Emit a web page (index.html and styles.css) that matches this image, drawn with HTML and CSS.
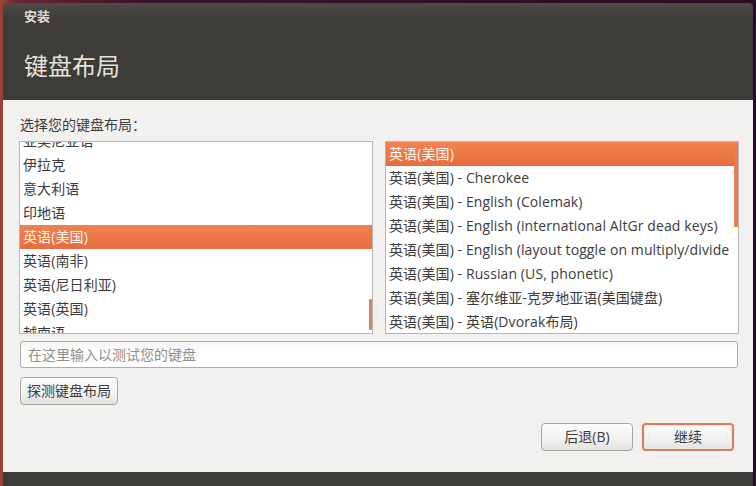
FILE: index.html
```html
<!DOCTYPE html>
<html lang="zh-CN">
<head>
<meta charset="utf-8">
<title>安装</title>
<link rel="stylesheet" href="styles.css">
</head>
<body>
<div class="window">
  <header class="titlebar">
    <div class="wm-title">安装</div>
    <h1 class="heading">键盘布局</h1>
  </header>
  <main class="content">
    <div class="label">选择您的键盘布局：</div>
    <div class="lists">
      <div class="list">
        <ul class="rows rows-scrolled">
          <li>亚美尼亚语</li>
          <li>伊拉克</li>
          <li>意大利语</li>
          <li>印地语</li>
          <li class="selected">英语(美国)</li>
          <li>英语(南非)</li>
          <li>英语(尼日利亚)</li>
          <li>英语(英国)</li>
          <li>越南语</li>
        </ul>
        <div class="scroll scroll-left"></div>
      </div>
      <div class="list">
        <ul class="rows">
          <li class="selected">英语(美国)</li>
          <li>英语(美国) - Cherokee</li>
          <li>英语(美国) - English (Colemak)</li>
          <li>英语(美国) - English (international AltGr dead keys)</li>
          <li>英语(美国) - English (layout toggle on multiply/divide key)</li>
          <li>英语(美国) - Russian (US, phonetic)</li>
          <li>英语(美国) - 塞尔维亚-克罗地亚语(美国键盘)</li>
          <li>英语(美国) - 英语(Dvorak布局)</li>
        </ul>
        <div class="scroll scroll-right"></div>
      </div>
    </div>
    <input class="test-input" type="text" placeholder="在这里输入以测试您的键盘">
    <div class="detect-row">
      <button class="btn btn-detect">探测键盘布局</button>
    </div>
    <div class="footer">
      <button class="btn btn-wide">后退(B)</button>
      <button class="btn btn-wide btn-default">继续</button>
    </div>
  </main>
  <div class="bottombar"></div>
</div>
</body>
</html>
```
FILE: styles.css
```css
html, body {
  margin: 0;
  padding: 0;
}
body {
  width: 756px;
  height: 486px;
  overflow: hidden;
  background: linear-gradient(90deg, #9a4638 0, #6a2634 2%, #3a1229 20%, #2a0c1f 100%);
  font-family: "Open Sans", "Noto Sans CJK SC", sans-serif;
  color: #3c3c3c;
}
.window {
  margin: 3px 3px 0 3px;
  height: 483px;
  display: flex;
  flex-direction: column;
  border-radius: 4px 4px 0 0;
  overflow: hidden;
}
.titlebar {
  height: 97px;
  background: linear-gradient(#4d4c47 0, #43423e 8px, #3c3b37 16px, #3c3b37 100%);
  display: flex;
  flex-direction: column;
  padding-left: 21px;
  box-sizing: border-box;
}
.wm-title {
  font-family: "Noto Sans CJK SC", sans-serif;
  font-size: 13px;
  font-weight: 700;
  color: #dfdbd2;
  line-height: 18px;
  margin-top: 4px;
}
.heading {
  margin: 26px 0 0 0;
  font-family: "Noto Sans CJK SC", sans-serif;
  font-weight: 400;
  font-size: 24px;
  line-height: 28px;
  color: #e4e1da;
}
.content {
  flex: 1;
  background: #f2f1f0;
  padding: 15px 14px 0 15px;
  display: flex;
  flex-direction: column;
  border-left: 1px solid #f7f6f4;
}
.label {
  font-size: 14px;
  line-height: 20px;
  height: 20px;
  margin-left: 1px;
}
.lists {
  margin-top: 6px;
  display: grid;
  grid-template-columns: 354px 354px;
  column-gap: 12px;
  height: 193px;
}
.list {
  position: relative;
  background: #ffffff;
  border: 1px solid #b9b7b3;
  overflow: hidden;
}
.rows {
  list-style: none;
  margin: 0 4px 0 0;
  padding: 0;
}
.rows-scrolled {
  margin-top: -13px;
  margin-right: 0;
}
.rows li {
  height: 24px;
  line-height: 24px;
  font-size: 14px;
  padding-left: 3px;
  white-space: nowrap;
  overflow: hidden;
  color: #3c3c3c;
  letter-spacing: 0.1px;
}
.rows li.selected {
  background: linear-gradient(#f28250, #e76d3e);
  color: #fff8f4;
}
.scroll {
  position: absolute;
  right: 0;
  width: 4px;
  border-radius: 1px;
}
.scroll-left {
  top: 157px;
  height: 31px;
  background: #db8260;
  width: 3px;
}
.scroll-right {
  top: 0;
  height: 85px;
  background: #ec7a4b;
}
.test-input {
  margin: 7px 0 0 1px;
  width: 718px;
  height: 27px;
  box-sizing: border-box;
  border: 1px solid #aeaca8;
  border-radius: 3px;
  background: linear-gradient(#f5f5f4, #ffffff 40%);
  font-family: "Open Sans", "Noto Sans CJK SC", sans-serif;
  font-size: 14px;
  padding: 0 7px;
  color: #3c3c3c;
  outline: none;
}
.test-input::placeholder {
  color: #8e8e8c;
}
.detect-row {
  display: flex;
  margin-top: 9px;
  padding-left: 1px;
}
.btn {
  height: 28px;
  box-sizing: border-box;
  border: 1px solid #a9a7a3;
  border-radius: 4px;
  background: linear-gradient(#fdfdfd, #f1f0ef 60%, #e4e2df);
  font-family: "Open Sans", "Noto Sans CJK SC", sans-serif;
  font-size: 14px;
  color: #3c3c3c;
  padding: 0 5px;
  line-height: 24px;
}
.btn-detect {
  width: 98px;
  padding: 0;
}
.footer {
  display: flex;
  justify-content: flex-end;
  gap: 9px;
  margin-top: 18px;
  padding-right: 5px;
}
.btn-wide {
  width: 92px;
}
.btn-default {
  border: 2px solid #df7c58;
  box-shadow: inset 0 0 0 1px #efe9e5;
}
.bottombar {
  height: 14px;
  background: #3c3b37;
}
```
